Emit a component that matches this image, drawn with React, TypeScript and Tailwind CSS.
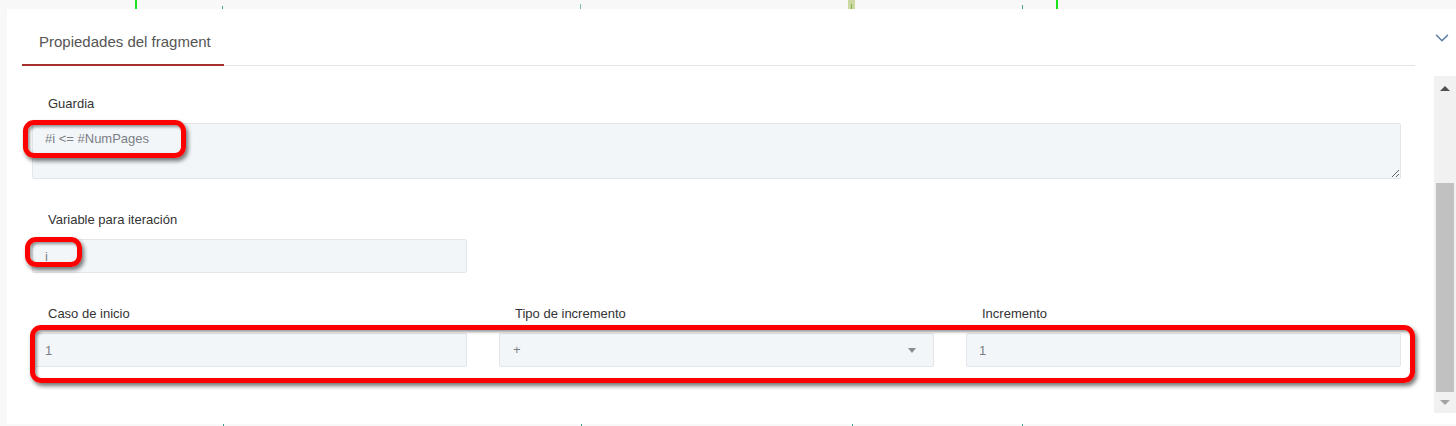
import { ChevronDown } from 'lucide-react';

// thin marks of the diagram canvas peeking out above and below the panel
const topMarks = [
  { x: 135, w: 2, top: 0, color: '#19e619' },
  { x: 222, w: 1, top: 6, color: '#4aa88a' },
  { x: 580, w: 1, top: 4, color: '#7cc29a' },
  { x: 1022, w: 1, top: 5, color: '#4aa88a' },
  { x: 1056, w: 2, top: 0, color: '#19e619' },
];
const bottomMarks = [223, 581, 852, 1022];

const inputCls =
  "w-full rounded-[2px] border border-[#e3e7eb] bg-[#f3f6f9] px-[12px] text-[13px] leading-[16px] text-[#7a7f85] outline-none";

function Label({ children }: { children: string }) {
  return <p className="mb-[11px] pl-[16px] text-[13px] leading-[16px] text-[#333]">{children}</p>;
}

function Callout({ className }: { className: string }) {
  return (
    <div
      className={`pointer-events-none absolute rounded-[11px] border-[5px] border-[#ff0000] shadow-[2px_3px_4px_rgba(0,0,0,0.55),inset_2px_2px_3px_rgba(0,0,0,0.4)] ${className}`}
    />
  );
}

export default function App() {
  return (
    <div className="relative h-[426px] w-[1456px] overflow-hidden bg-[#f8f8f8] font-['Liberation_Sans',Arial,sans-serif]">
      {topMarks.map((m) => (
        <span
          key={m.x}
          className="absolute h-[9px]"
          style={{ left: m.x, width: m.w, top: m.top, height: 9 - m.top, background: m.color }}
        />
      ))}
      <span className="absolute left-[848px] top-0 h-[9px] w-[7px] bg-[#cbd9a1]" />
      <span className="absolute left-[851px] top-[4px] h-[5px] w-[1px] bg-[#7fae55]" />
      {bottomMarks.map((x) => (
        <span key={x} className="absolute top-[424px] h-[2px] w-[1px] bg-[#3b9c86]" style={{ left: x }} />
      ))}

      <div className="pl-[7px] pt-[9px]">
        <div className="flex h-[415px] flex-col bg-white">
          {/* Header */}
          <div className="flex items-start">
            <div className="ml-[15px] flex w-[1393px] border-b border-[#e4e4e4]">
              <div className="-mb-px w-[202px] border-b-2 border-[#a8302c] pb-[14px] pl-[17px] pt-[25px] text-[15px] leading-[16px] text-[#555]">
                Propiedades del fragment
              </div>
            </div>
            <ChevronDown className="ml-[16px] mt-[18px] h-[22px] w-[22px] text-[#5a7ba3]" strokeWidth={1.6} />
          </div>

          {/* Body */}
          <div className="flex flex-1">
            <div className="flex-1 pl-[25px] pr-[33px] pt-[30px]">
              <Label>Guardia</Label>
              <textarea
                readOnly
                value="#i <= #NumPages"
                className={`${inputCls} block h-[56px] py-[7px]`}
              />

              <div className="mt-[33px] grid grid-cols-3 gap-x-[32px]">
                <div>
                  <Label>Variable para iteración</Label>
                  <input readOnly value="i" className={`${inputCls} h-[34px]`} />
                </div>
              </div>

              <div className="mt-[33px] grid grid-cols-3 gap-x-[32px]">
                <div>
                  <Label>Caso de inicio</Label>
                  <input readOnly value="1" className={`${inputCls} h-[34px]`} />
                </div>
                <div>
                  <Label>Tipo de incremento</Label>
                  <div className={`${inputCls} flex h-[34px] items-center justify-between pl-[13px] pr-[17px]`}>
                    <span>+</span>
                    <span className="h-0 w-0 border-x-[4px] border-t-[5px] border-x-transparent border-t-[#8a8d91]" />
                  </div>
                </div>
                <div>
                  <Label>Incremento</Label>
                  <input readOnly value="1" className={`${inputCls} h-[34px]`} />
                </div>
              </div>
            </div>

            {/* Scrollbar */}
            <div className="mt-[10px] flex h-[337px] w-[22px] flex-col items-center bg-[#f1f1f1]">
              <div className="flex h-[24px] w-full items-center justify-center">
                <span className="h-0 w-0 border-x-[5px] border-b-[5px] border-x-transparent border-b-[#505050]" />
              </div>
              <div className="mt-[83px] h-[209px] w-[18px] bg-[#c1c1c1]" />
              <div className="flex flex-1 w-full items-center justify-center">
                <span className="h-0 w-0 border-x-[5px] border-t-[5px] border-x-transparent border-t-[#a3a3a3]" />
              </div>
            </div>
          </div>
        </div>
      </div>

      <Callout className="left-[23px] top-[120px] h-[38px] w-[163px]" />
      <Callout className="left-[25px] top-[237px] h-[30px] w-[57px]" />
      <Callout className="left-[30px] top-[325px] h-[58px] w-[1385px]" />
    </div>
  );
}
